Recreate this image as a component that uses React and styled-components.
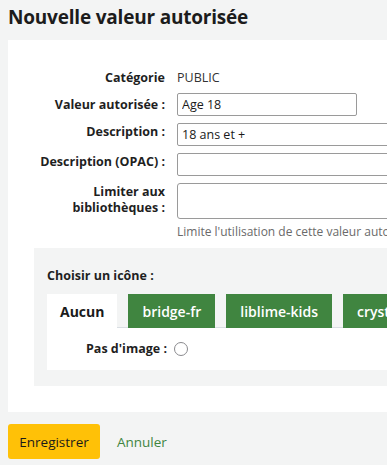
import styled, { createGlobalStyle } from "styled-components";

const GREEN = "#408540";

const GlobalStyle = createGlobalStyle`
  html, body {
    margin: 0;
    padding: 0;
    background: #f3f4f4;
    overflow: hidden;
  }
  body {
    font-family: "Open Sans", "DejaVu Sans", sans-serif;
    color: #1f1f1f;
  }
`;

const Page = styled.div`
  padding: 0 0 0 8px;
  width: 600px;
`;

const Title = styled.h1`
  margin: 0;
  padding: 5px 0 11px;
  font-size: 19px;
  line-height: 24px;
  font-weight: 700;
  color: #1c1c1c;
  letter-spacing: -0.2px;
`;

const Panel = styled.div`
  background: #fff;
  padding: 28px 0 26px;
`;

const Row = styled.div`
  display: grid;
  grid-template-columns: 157px 1fr;
  column-gap: 12px;
  align-items: start;
  margin-bottom: ${({ $last }) => ($last ? 0 : 7)}px;
`;

const Label = styled.label`
  text-align: right;
  font-size: 12.5px;
  font-weight: 700;
  line-height: 16px;
  padding-top: ${({ $top }) => $top ?? 2}px;
  color: #1f1f1f;
`;

const Value = styled.span`
  font-size: 12.5px;
  line-height: 16px;
  padding-top: 2px;
  color: #333;
`;

const Input = styled.input`
  box-sizing: border-box;
  width: ${({ $w }) => $w ?? 300}px;
  height: 23px;
  border: 1px solid #9a9a9a;
  border-radius: 2px;
  padding: 0 4px;
  font-family: inherit;
  font-size: 12.5px;
  color: #1a1a1a;
`;

const Textarea = styled.textarea`
  box-sizing: border-box;
  width: 300px;
  height: 36px;
  border: 1px solid #9a9a9a;
  border-radius: 3px;
  resize: none;
`;

const Hint = styled.div`
  margin: 4px 0 0 169px;
  font-size: 12px;
  color: #6a6a6a;
  white-space: nowrap;
`;

const Fieldset = styled.div`
  margin: 8px 0 0 26px;
  background: #f3f4f4;
  padding: 20px 0 16px 13px;
`;

const Legend = styled.div`
  font-size: 12.5px;
  font-weight: 700;
  line-height: 16px;
  margin-bottom: 10px;
`;

const Tabs = styled.div`
  display: flex;
  gap: 11px;
  border-bottom: 1px solid #d9dee3;
`;

const Tab = styled.div`
  height: 34px;
  display: flex;
  align-items: center;
  padding: 0 ${({ $active }) => ($active ? 13 : 14)}px;
  font-size: 14px;
  font-weight: ${({ $active }) => ($active ? 700 : 600)};
  background: ${({ $active }) => ($active ? "#fff" : GREEN)};
  color: ${({ $active }) => ($active ? "#1a1a1a" : "#fff")};
  margin-bottom: -1px;
  white-space: nowrap;
`;

const TabPanel = styled.div`
  background: #fff;
  height: 42px;
  display: flex;
  align-items: center;
  padding-left: 39px;
  gap: 7px;
`;

const Radio = styled.span`
  width: 12px;
  height: 12px;
  border: 1px solid #8a8a8e;
  border-radius: 50%;
  background: #fff;
`;

const Footer = styled.div`
  display: flex;
  align-items: center;
  gap: 17px;
  padding-top: 12px;
`;

const SaveButton = styled.button`
  background: #ffc107;
  border: none;
  border-radius: 3px;
  width: 92px;
  height: 35px;
  font-family: inherit;
  font-size: 13.5px;
  color: #1a1a1a;
`;

const CancelLink = styled.a`
  color: ${GREEN};
  font-size: 13.5px;
  text-decoration: none;
`;

export default function App() {
  return (
    <>
      <GlobalStyle />
      <Page>
        <Title>Nouvelle valeur autorisée</Title>
        <Panel>
          <Row>
            <Label>Catégorie</Label>
            <Value>PUBLIC</Value>
          </Row>
          <Row>
            <Label $top={4}>Valeur autorisée :</Label>
            <Input $w={180} defaultValue="Age 18" />
          </Row>
          <Row>
            <Label $top={1}>Description :</Label>
            <Input defaultValue="18 ans et +" />
          </Row>
          <Row>
            <Label $top={1}>Description (OPAC) :</Label>
            <Input />
          </Row>
          <Row $last>
            <Label $top={1}>
              Limiter aux
              <br />
              bibliothèques :
            </Label>
            <Textarea />
          </Row>
          <Hint>Limite l'utilisation de cette valeur autorisée aux bibliothèques sélectionnées</Hint>
          <Fieldset>
            <Legend>Choisir un icône :</Legend>
            <Tabs>
              <Tab $active>Aucun</Tab>
              <Tab>bridge-fr</Tab>
              <Tab>liblime-kids</Tab>
              <Tab>crystal-clear</Tab>
            </Tabs>
            <TabPanel>
              <Label as="span" $top={0}>Pas d'image :</Label>
              <Radio />
            </TabPanel>
          </Fieldset>
        </Panel>
        <Footer>
          <SaveButton>Enregistrer</SaveButton>
          <CancelLink href="#">Annuler</CancelLink>
        </Footer>
      </Page>
    </>
  );
}
